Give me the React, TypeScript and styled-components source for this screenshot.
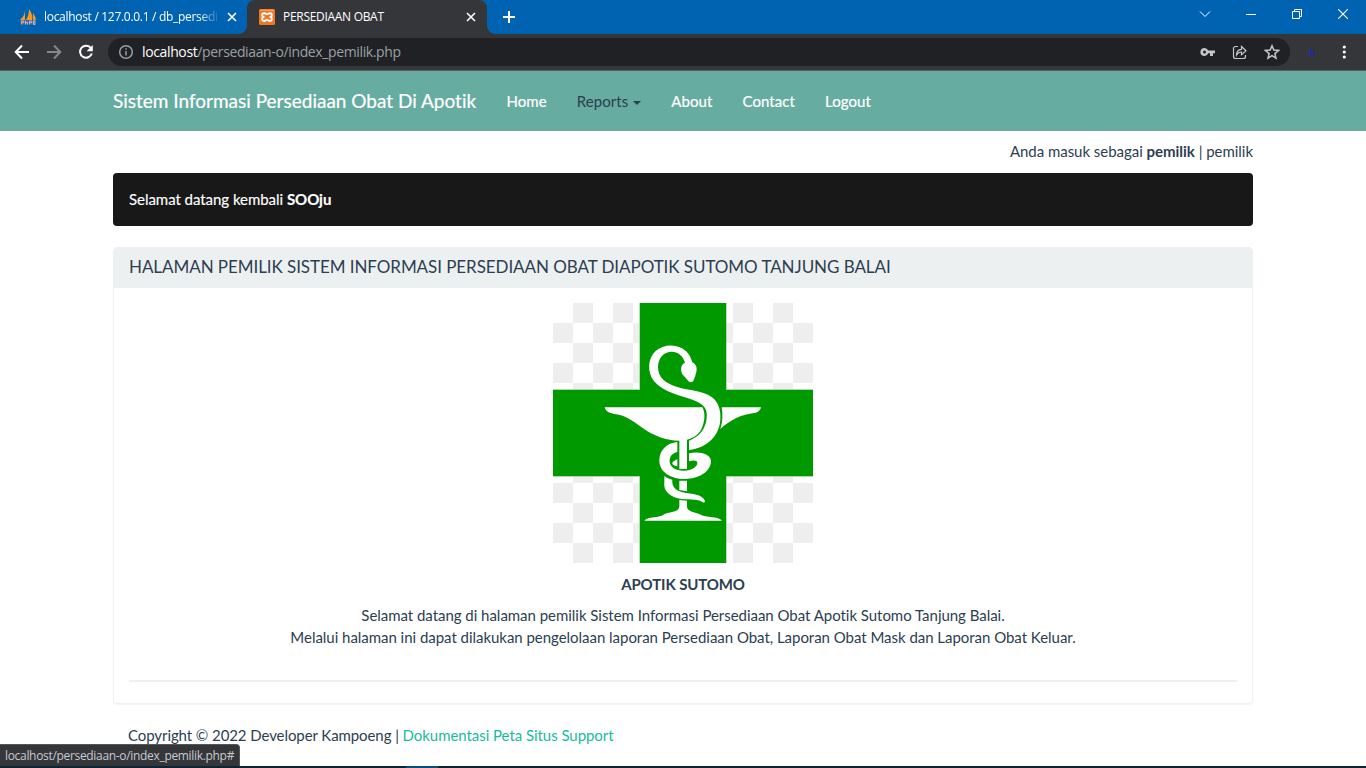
import React from "react";
import styled, { createGlobalStyle } from "styled-components";

const Global = createGlobalStyle`
  * { box-sizing: border-box; }
  html, body { margin: 0; padding: 0; }
  body {
    height: 768px; overflow: hidden; background: #fff; color: #2c3e50;
    font: 15px/1.42857143 Lato, "Liberation Sans", sans-serif;
    font-variant-ligatures: none;
  }
  svg { display: block; flex: none; }
`;

const Screen = styled.div`
  width: 1366px; height: 768px; display: flex; flex-direction: column;
  overflow: hidden; position: relative;
`;

const uiFont = `"Open Sans", "Noto Sans", sans-serif`;

const TabStrip = styled.div`
  height: 34px; flex: none; display: flex; background: #0063b1; color: #fff;
  font: 12px/34px ${uiFont};
`;
const Tab = styled.div<{ $active?: boolean }>`
  position: relative; display: flex; align-items: center; height: 34px;
  width: ${(p) => (p.$active ? 240 : 247)}px;
  padding: ${(p) => (p.$active ? "0 11px 0 12px" : "0 10px 0 20px")};
  background: ${(p) => (p.$active ? "#35363a" : "transparent")};
  border-radius: 8px 8px 0 0;
  &::before, &::after {
    content: ""; display: ${(p) => (p.$active ? "block" : "none")};
    position: absolute; bottom: 0; width: 8px; height: 8px;
  }
  &::before { left: -8px; background: radial-gradient(circle at 0 0, transparent 7.5px, #35363a 8px); }
  &::after { right: -8px; background: radial-gradient(circle at 100% 0, transparent 7.5px, #35363a 8px); }
`;
const TabTitle = styled.span<{ $fade?: boolean; $spacing: number }>`
  flex: 1; min-width: 0; margin-left: 8px; margin-right: 7px; overflow: hidden; white-space: nowrap;
  letter-spacing: ${(p) => p.$spacing}px;
  mask-image: ${(p) => (p.$fade ? "linear-gradient(90deg,#000 88%,transparent)" : "none")};
`;
const NewTab = styled.div`
  display: flex; align-items: center; margin-left: 15px;
`;
const WindowButtons = styled.div`
  margin-left: auto; display: flex; height: 28px; align-items: center;
`;
const WindowButton = styled.div`
  width: 46px; display: flex; justify-content: center;
`;

const Toolbar = styled.div`
  height: 37px; flex: none; display: flex; align-items: center;
  background: #35363a; border-bottom: 1px solid #5b5c60; padding: 0 14px;
`;
const NavButtons = styled.div`
  display: flex; gap: 16px; width: 94px;
`;
const AddressBar = styled.div`
  width: 1182px; height: 28px; border-radius: 14px; background: #202124;
  display: flex; align-items: center; padding: 0 10px;
`;
const Address = styled.span`
  margin-left: 8px; flex: 1; color: #9aa0a6; font: 14px/28px ${uiFont}; letter-spacing: -0.37px;
  b { font-weight: 400; color: #fff; }
`;
const AddressIcons = styled.div`
  display: flex; gap: 16px;
`;
const Extension = styled.span`
  color: #1726d8; font: bold 8px/10px ${uiFont}; margin: 2px 0 0 19px; width: 5px;
`;
const MenuDots = styled.div`
  margin-left: 22px;
`;

const Navbar = styled.nav`
  height: 60px; flex: none; background: #66aca0; color: #fff;
`;
const Container = styled.div`
  width: 1140px; margin: 0 auto; display: flex; flex-direction: column;
`;
const NavRow = styled(Container)`
  flex-direction: row; height: 60px; align-items: center; padding-bottom: 2px;
`;
const Brand = styled.span`
  font-size: 19px; line-height: 21px; width: 378.5px; white-space: nowrap; -webkit-text-stroke: .2px currentColor;
`;
const NavLink = styled.a<{ $open?: boolean }>`
  padding: 3px 15px 0; line-height: 21px; white-space: nowrap; letter-spacing: .07px;
  -webkit-text-stroke: ${(p) => (p.$open ? 0 : 0.2)}px currentColor;
  display: flex; align-items: center; color: ${(p) => (p.$open ? "#2c3e50" : "#fff")};
`;
const Caret = styled.i`
  margin-left: 5px; margin-top: 2px; border: 4px solid transparent; border-top-color: #2c3e50; border-bottom: 0;
`;

const Session = styled.p`
  margin: 9px 0 11px; line-height: 22px; text-align: right; letter-spacing: -.03px;
`;
const Welcome = styled.div`
  height: 53px; padding: 16px; line-height: 21px; border-radius: 4px; background: #181818; color: #fff;
  letter-spacing: -.04px; -webkit-text-stroke: .15px currentColor;
`;
const Panel = styled.section`
  margin-top: 21px; height: 457px; border: 1px solid #ecf0f1; border-radius: 4px;
  box-shadow: 0 1px 1px rgba(0,0,0,.05); overflow: hidden;
`;
const PanelTitle = styled.h3`
  margin: 0; height: 40px; padding: 9px 15px; background: #ecf0f1;
  font-weight: 400; font-size: 17px; line-height: 20px; letter-spacing: -.066px;
`;
const PanelBody = styled.div`
  padding: 15px; display: flex; flex-direction: column; align-items: center; text-align: center;
`;
const PharmacyName = styled.strong`
  margin-top: 11px; line-height: 21px; letter-spacing: -.12px;
`;
const Intro = styled.p`
  margin: 9px 0 0; line-height: 22px; letter-spacing: -.032px;
`;
const Divider = styled.hr`
  width: 100%; margin: 32px 0 0; border: 0; border-top: 2px solid #ecf0f1;
`;
const Footer = styled.footer`
  margin-top: 21px; padding-left: 15px; line-height: 21px; letter-spacing: -.08px;
  a { color: #18bc9c; letter-spacing: -.05px; }
`;
const StatusBubble = styled.div`
  position: absolute; left: 0; bottom: 2px; width: 240px; height: 22px; padding-left: 5px;
  border: 1px solid #55565a; border-left: 0; border-bottom: 0; border-radius: 0 4px 0 0;
  background: #35363a; color: #c8cace; font: 12px/21px ${uiFont}; letter-spacing: -0.32px; white-space: nowrap;
`;
const TaskbarEdge = styled.div`
  position: absolute; left: 0; right: 0; bottom: 0; height: 2px;
  background: linear-gradient(90deg, #0e2433 406px, #0a4a7c 406px, #0a4a7c 438px, #0e2433 438px);
`;

const CloseIcon = () => (
  <svg width="10" height="10" viewBox="0 0 10 10" stroke="#fff" strokeWidth="1.6"><path d="M1 1l8 8M9 1l-8 8" /></svg>
);

const SailIcon = () => (
  <svg width="16" height="16" viewBox="0 0 16 16">
    <path d="M5 1C5 5 3 8 0 11h5zM9 0c3 4 4 8 3 11H6C8 8 9 4 9 0zM13 4c1 2 3 4 3 7h-3z" fill="#f59a23" />
    <path d="M0 11h16l-1 4.5H1z" fill="#5a6290" />
    <path d="M1.500 15.500v-3.500h2.200v1.700H1.500M5.500 11.500v4M5.500 13.500h2v2M9.500 15.500v-3.500h2.200v1.700H9.500M13.500 12h1.500v3.500h-1.500z" stroke="#c9cbd8" strokeWidth=".8" fill="none" />
  </svg>
);

const XamppIcon = () => (
  <svg width="16" height="16" viewBox="0 0 16 16">
    <rect width="16" height="16" rx="1.5" fill="#f37623" />
    <path d="M1 1.200h14" stroke="#fbb787" strokeWidth=".8" />
    <path d="M5.200 4.200C2.600 4.200 2.400 6.900 4.400 8c-2 1.200-1.800 4 .8 4 1.400 0 1.700-1.200 2.800-1.200s1.400 1.200 2.800 1.200c2.600 0 2.800-2.800.8-4 2-1.100 1.800-3.800-.8-3.800-1.400 0-1.700 1.200-2.800 1.200S6.600 4.200 5.200 4.200z" fill="none" stroke="#fff" strokeWidth="1.900" />
  </svg>
);

const shades: [number, number][] = [];
for (let row = 0; row < 13; row++)
  for (let col = 0; col < 13; col++) if ((row + col) % 2) shades.push([col, row]);

const PharmacyLogo = () => (
  <svg width="260" height="260" viewBox="9 9 780 780">
    <rect x="9" y="9" width="780" height="780" fill="#fff" />
    {shades.map(([c, r]) => (
      <rect key={`${c}-${r}`} x={9 + c * 60} y={9 + r * 60} width="60" height="60" fill="#eee" shapeRendering="crispEdges" />
    ))}
    <path d="M268 9H530V268H789V530H530V789H268V530H9V268H268Z" fill="#8fd08f" />
    <path d="M270 9H528V270H789V528H528V789H270V528H9V270H270Z" fill="#090" />
    <g fill="#fff">
      <path d="M164 322H457C465 335 466 360 457 380C450 400 432 415 411 419V507H388V422C350 422 309 407 278 384C246 361 220 343 193 342C178 340 166 333 164 322Z" />
      <path d="M515 322H633C631 332 622 339 608 340C575 344 542 359 511 387C518 365 519 343 515 322Z" />
      <path d="M388 542H411V574L388 570ZM388 600L411 602V622C414 635 432 636 450 643C466 655 506 648 516 662H283C294 648 327 656 344 642C362 635 384 637 388 621Z" />
      <path d="M405 188C399 168 386 156 366 155C340 155 324 175 324 202C324 232 346 250 379 260C422 273 456 270 485 291C506 307 513 331 511 358C509 407 471 445 417 450V422C448 410 467 387 470 354C473 325 461 313 435 302C394 287 340 277 312 244C291 217 293 176 316 154C348 124 403 134 420 169L427 187C435 191 441 199 440 210C438 224 434 233 430 243C426 248 417 248 413 241L396 221C391 207 393 193 405 188Z" />
      <path d="M382 426V456C365 460 358 471 359 486C361 503 379 512 400 512C423 513 442 501 442 489C441 480 431 480 417 484V460C448 454 483 460 483 486C480 516 447 536 405 537C366 538 327 518 328 480C329 450 350 429 382 426Z" />
      <path d="M382 477V499C375 498 367 495 367 490C367 484 376 482 382 477Z" />
      <path d="M343 528C350 534 358 537 367 539C365 553 373 568 387 573C410 584 455 577 465 603Q465 609 458 607C446 596 425 600 395 597C360 592 339 574 343 546Z" />
    </g>
  </svg>
);

export default function App() {
  return (
    <>
      <Global />
      <Screen>
        <TabStrip>
          <Tab>
            <SailIcon />
            <TabTitle $fade $spacing={-0.3}>localhost / 127.0.0.1 / db_persedi</TabTitle>
            <CloseIcon />
          </Tab>
          <Tab $active>
            <XamppIcon />
            <TabTitle $spacing={-0.3}>PERSEDIAAN OBAT</TabTitle>
            <CloseIcon />
          </Tab>
          <NewTab>
            <svg width="14" height="14" viewBox="0 0 14 14" stroke="#fff" strokeWidth="2"><path d="M7 1v12M1 7h12" /></svg>
          </NewTab>
          <WindowButtons>
            <WindowButton><svg width="12" height="12" viewBox="0 0 12 12" fill="none" stroke="#fff"><path d="M1 3.500l5 5 5-5" /></svg></WindowButton>
            <WindowButton><svg width="10" height="10" stroke="#fff"><path d="M0 5.500h10" /></svg></WindowButton>
            <WindowButton><svg width="10" height="10" fill="none" stroke="#fff"><path d="M.5 2.500h7v7h-7zM2.500 2.500v-2h7v7h-2" /></svg></WindowButton>
            <WindowButton><svg width="10" height="10" stroke="#fff" strokeWidth="1.100"><path d="M0 0l10 10M10 0L0 10" /></svg></WindowButton>
          </WindowButtons>
        </TabStrip>
        <Toolbar>
          <NavButtons>
            <svg width="16" height="16" viewBox="0 0 16 16" fill="none" stroke="#fff" strokeWidth="2"><path d="M15 8H2M8 1.500L1.700 8 8 14.500" /></svg>
            <svg width="16" height="16" viewBox="0 0 16 16" fill="none" stroke="#85868a" strokeWidth="2"><path d="M1 8h13M8 1.500L14.300 8 8 14.500" /></svg>
            <svg width="16" height="16" viewBox="0 0 16 16"><path d="M13 4.300A6 6 0 1 0 13.800 9.500" fill="none" stroke="#fff" strokeWidth="2" /><path d="M14.800 1v6.200H8.600z" fill="#fff" /></svg>
          </NavButtons>
          <AddressBar>
            <svg width="16" height="16" viewBox="0 0 16 16" fill="none" stroke="#9aa0a6" strokeWidth="1.500"><circle cx="8" cy="8" r="6.300" /><path d="M8 7v4.500M8 4.300v1.500" /></svg>
            <Address><b>localhost</b>/persediaan-o/index_pemilik.php</Address>
            <AddressIcons>
              <svg width="16" height="16" viewBox="0 0 16 16" fill="#c4c6ca"><path fillRule="evenodd" d="M4.500 4a4 4 0 1 0 3.700 5.300H10V12h3V9.300h2V6.500H8.200A4 4 0 0 0 4.500 4zm0 2.500a1.500 1.500 0 1 1 0 3 1.500 1.500 0 0 1 0-3z" /></svg>
              <svg width="16" height="16" viewBox="0 0 16 16" fill="none" stroke="#c4c6ca" strokeWidth="1.200"><path d="M6 2.500H3.500a2 2 0 0 0-2 2v8a2 2 0 0 0 2 2h8a2 2 0 0 0 2-2V11" /><path d="M4.500 11C4.500 7 6.500 5.500 9.500 5.300V2.500L14 6.700l-4.500 4V8C7 8 5.700 9 4.500 11z" /></svg>
              <svg width="16" height="16" viewBox="0 0 16 16" fill="none" stroke="#c4c6ca" strokeWidth="1.500"><path d="M8 1.800l1.800 4.300 4.700.4-3.600 3.100 1.100 4.600L8 11.700l-4 2.500 1.100-4.600-3.600-3.100 4.700-.4z" /></svg>
            </AddressIcons>
          </AddressBar>
          <Extension>b</Extension>
          <MenuDots>
            <svg width="16" height="16" viewBox="0 0 16 16" fill="#fff"><circle cx="8.300" cy="3" r="1.600" /><circle cx="8.300" cy="8" r="1.600" /><circle cx="8.300" cy="13" r="1.600" /></svg>
          </MenuDots>
        </Toolbar>
        <Navbar>
          <NavRow>
            <Brand>Sistem Informasi Persediaan Obat Di Apotik</Brand>
            <NavLink>Home</NavLink>
            <NavLink $open>Reports<Caret /></NavLink>
            <NavLink>About</NavLink>
            <NavLink>Contact</NavLink>
            <NavLink>Logout</NavLink>
          </NavRow>
        </Navbar>
        <Container>
          <Session>Anda masuk sebagai <strong>pemilik</strong> | pemilik</Session>
          <Welcome>Selamat datang kembali <strong>SOOju</strong></Welcome>
          <Panel>
            <PanelTitle>HALAMAN PEMILIK SISTEM INFORMASI PERSEDIAAN OBAT DIAPOTIK SUTOMO TANJUNG BALAI</PanelTitle>
            <PanelBody>
              <PharmacyLogo />
              <PharmacyName>APOTIK SUTOMO</PharmacyName>
              <Intro>
                Selamat datang di halaman pemilik Sistem Informasi Persediaan Obat Apotik Sutomo Tanjung Balai.<br />
                Melalui halaman ini dapat dilakukan pengelolaan laporan Persediaan Obat, Laporan Obat Mask dan Laporan Obat Keluar.
              </Intro>
              <Divider />
            </PanelBody>
          </Panel>
          <Footer>Copyright © 2022 Developer Kampoeng | <a>Dokumentasi Peta Situs Support</a></Footer>
        </Container>
        <TaskbarEdge />
        <StatusBubble>localhost/persediaan-o/index_pemilik.php#</StatusBubble>
      </Screen>
    </>
  );
}
